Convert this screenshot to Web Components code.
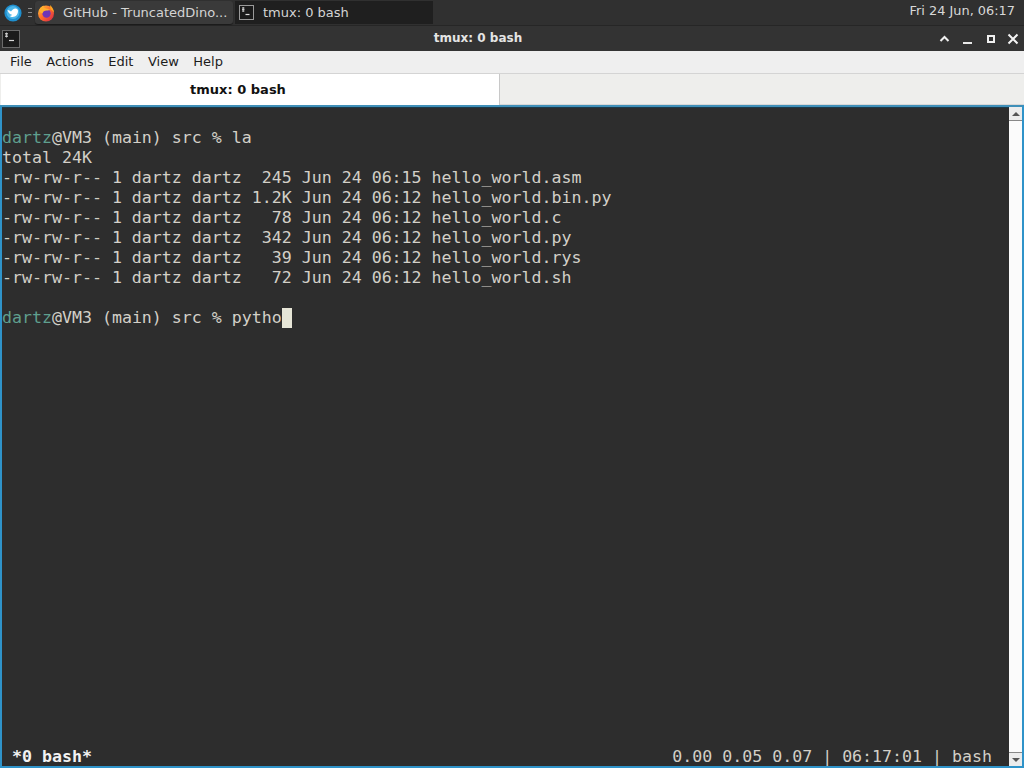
<!DOCTYPE html>
<html>
<head>
<meta charset="utf-8">
<title>tmux: 0 bash</title>
<style>
  html, body { margin: 0; padding: 0; width: 1024px; height: 768px; overflow: hidden; background: #2d2d2d; }
  body { display: flex; flex-direction: column; font-family: "DejaVu Sans", sans-serif; }
</style>
</head>
<body>

<top-panel>
  <task-button slot="tasks" active label="GitHub - TruncatedDino..." icon="firefox"></task-button>
  <task-button slot="tasks" label="tmux: 0 bash" icon="terminal"></task-button>
  <span slot="clock">Fri 24 Jun, 06:17</span>
</top-panel>
<title-bar>tmux: 0 bash</title-bar>
<menu-bar>
  <span>File</span><span>Actions</span><span>Edit</span><span>View</span><span>Help</span>
</menu-bar>
<tab-bar>tmux: 0 bash</tab-bar>
<terminal-view>
  <term-line></term-line>
  <term-line><em>dartz</em>@VM3 (main) src % la</term-line>
  <term-line>total 24K</term-line>
  <term-line>-rw-rw-r-- 1 dartz dartz  245 Jun 24 06:15 hello_world.asm</term-line>
  <term-line>-rw-rw-r-- 1 dartz dartz 1.2K Jun 24 06:12 hello_world.bin.py</term-line>
  <term-line>-rw-rw-r-- 1 dartz dartz   78 Jun 24 06:12 hello_world.c</term-line>
  <term-line>-rw-rw-r-- 1 dartz dartz  342 Jun 24 06:12 hello_world.py</term-line>
  <term-line>-rw-rw-r-- 1 dartz dartz   39 Jun 24 06:12 hello_world.rys</term-line>
  <term-line>-rw-rw-r-- 1 dartz dartz   72 Jun 24 06:12 hello_world.sh</term-line>
  <term-line></term-line>
  <term-line><em>dartz</em>@VM3 (main) src % pytho<term-cursor></term-cursor></term-line>
  <tmux-status slot="status"></tmux-status>
</terminal-view>

<template id="top-panel-template">
  <style>
    :host { display: flex; align-items: stretch; height: 26px; background: #303030; color: #d8d8d8; font-size: 13px; flex: none; border-bottom: 1px solid #262626; box-sizing: border-box; }
    .logo { width: 18px; height: 18px; margin: 4px 0 0 4px; flex: none; }
    .grip { width: 4px; height: 11px; margin: 8px 3px 0 6px; flex: none; background: repeating-linear-gradient(#8a8a8a 0 1px, transparent 1px 4px); }
    .tasks { display: flex; height: 24px; margin-top: 1px; gap: 2px; }
    .clock { margin-left: auto; padding: 3px 9px 0 0; white-space: nowrap; font-size: 12.9px; }
  </style>
  <svg class="logo" viewBox="0 0 18 18">
    <circle cx="9" cy="9" r="8.6" fill="#1f8fce"/>
    <circle cx="9" cy="8.500" r="6.500" fill="#4db6e8"/>
    <path d="M3.500 6c1.500 0 2.500.8 3.500 1.500C8 6 9.500 4.500 11.500 4.500c1.500 0 2.500 1 2.500 2.500 0 3-2 6-5.500 6-1 0-2-.4-2.500-1 1 0 1.800-.5 2-1.200C6 10.500 4 8.500 3.500 6z" fill="#fff"/>
  </svg>
  <div class="grip"></div>
  <div class="tasks"><slot name="tasks"></slot></div>
  <div class="clock"><slot name="clock"></slot></div>
</template>

<template id="task-button-template">
  <style>
    :host { display: flex; align-items: center; width: 198px; height: 23px; box-sizing: border-box; background: #1f1f1f; color: #d4d4d4; font-size: 13px; white-space: nowrap; padding-left: 4px; }
    :host([active]) { background: #3a3a3a; border-radius: 3px; box-shadow: 0 1px 1px #1a1a1a; padding-left: 2px; }
    #icon { display: flex; flex: none; width: 15px; height: 15px; }
    :host([active]) #icon { width: 18px; height: 18px; }
    #icon svg { width: 100%; height: 100%; }
    #label { margin-left: 9px; }
    :host([active]) #label { margin-left: 8px; }
  </style>
  <span id="icon"></span>
  <span id="label"></span>
</template>

<template id="title-bar-template">
  <style>
    :host { display: flex; align-items: center; height: 25px; background: #333333; color: #e4e4e4; font-size: 12px; font-weight: bold; flex: none; }
    .icon { width: 18px; height: 18px; margin-left: 2px; flex: none; }
    .title { flex: 1; text-align: center; padding: 0 0 2px 3px; }
    .btns { display: flex; flex: none; }
    .btns svg { width: 23px; height: 14px; display: block; flex: none; }
  </style>
  <svg class="icon" viewBox="0 0 18 18">
    <rect x=".5" y=".5" width="17" height="17" fill="#1b1b1b" stroke="#6a6a6a"/>
    <path d="M3 3.500h3M3 5h3M3 6.500h3M4.500 2.500v5" stroke="#d8d8d8" stroke-width=".8" fill="none"/>
    <path d="M7 10.500h5" stroke="#d8d8d8" stroke-width="1.200"/>
  </svg>
  <div class="title"><slot></slot></div>
  <div class="btns">
    <svg viewBox="0 0 23 14"><path d="M7.500 9l4-4 4 4" stroke="#f0f0f0" stroke-width="2" fill="none"/></svg>
    <svg viewBox="0 0 23 14"><path d="M7 11h9" stroke="#e8e8e8" stroke-width="2" fill="none"/></svg>
    <svg viewBox="0 0 23 14"><rect x="9" y="4" width="6" height="6" fill="none" stroke="#f0f0f0" stroke-width="2"/></svg>
    <svg viewBox="0 0 22 14" style="width:22px"><path d="M6.500 2.500l9 9M15.500 2.500l-9 9" stroke="#f4f4f4" stroke-width="2" fill="none"/></svg>
  </div>
</template>

<template id="menu-bar-template">
  <style>
    :host { display: flex; align-items: center; gap: 14.5px; height: 21px; padding: 0 0 1px 10px; background: #efefef; color: #1c1c1c; font-size: 13px; flex: none; border-bottom: 1px solid #d4d4d4; }
  </style>
  <slot></slot>
</template>

<template id="tab-bar-template">
  <style>
    :host { display: flex; height: 31px; background: #eeeeec; flex: none; box-sizing: border-box; }
    .tab { width: 499px; height: 31px; margin-left: 1px; box-sizing: border-box; padding-right: 24px; background: #ffffff; border-right: 1px solid #c8c8c8; color: #111; font-size: 13px; font-weight: bold; display: flex; align-items: center; justify-content: center; }
    .rest { flex: 1; border-bottom: 1px solid #d8d8d8; }
  </style>
  <div class="tab"><slot></slot></div>
  <div class="rest"></div>
</template>

<template id="terminal-view-template">
  <style>
    :host { display: flex; flex: 1; min-height: 0; box-sizing: border-box; background: #2d2d2d; border-top: 2px solid #3f8fb8; border-left: 2px solid #2f93c9; border-right: 2px solid #2f93c9; border-bottom: 2px solid #2f93c9; box-shadow: inset 0 1px 0 #1d3a4a; }
    .screen { flex: 1; min-width: 0; display: flex; flex-direction: column; padding-top: 1px; overflow: hidden; }
    .status { margin-top: auto; margin-bottom: -1px; }
  </style>
  <div class="screen">
    <slot></slot>
    <div class="status"><slot name="status"></slot></div>
  </div>
  <term-scrollbar></term-scrollbar>
</template>

<template id="term-line-template">
  <style>
    :host { display: flex; height: 20px; line-height: 20px; font-family: "DejaVu Sans Mono", monospace; font-size: 16.6px; color: #d3d0c8; white-space: pre; }
    ::slotted(em) { font-style: normal; color: #5f9f8e; }
  </style>
  <slot></slot>
</template>

<template id="term-cursor-template">
  <style>
    :host { display: block; width: 10px; height: 20px; background: #e6e5d6; }
  </style>
</template>

<template id="tmux-status-template">
  <style>
    :host { display: flex; justify-content: space-between; height: 20px; line-height: 20px; padding: 0 17px 0 10px; font-family: "DejaVu Sans Mono", monospace; font-size: 16.6px; color: #d3d0c8; white-space: pre; }
    b { color: #f2f2f2; }
  </style>
  <b>*0 bash*</b><span>0.00 0.05 0.07 | 06:17:01 | bash</span>
</template>

<template id="term-scrollbar-template">
  <style>
    :host { display: flex; flex-direction: column; justify-content: space-between; width: 13px; flex: none; background: #fbfbfb; box-sizing: border-box; }
    .b { height: 13px; background: #ececec; display: flex; align-items: center; justify-content: center; }
    .up { border-bottom: 1px solid #888; }
    .down { border-top: 1px solid #888; }
    i { display: block; width: 0; height: 0; border-left: 4px solid transparent; border-right: 4px solid transparent; }
    .up i { border-bottom: 4px solid #555; }
    .down i { border-top: 4px solid #555; }
  </style>
  <div class="b up"><i></i></div>
  <div class="b down"><i></i></div>
</template>

<script>
const ICONS = {
  firefox: `<svg viewBox="0 0 18 18">
    <defs><linearGradient id="ff" x1="0" y1="0" x2="1" y2="1"><stop offset="0" stop-color="#ffc93a"/><stop offset=".5" stop-color="#ff6a2b"/><stop offset="1" stop-color="#d5204f"/></linearGradient></defs>
    <circle cx="9" cy="9.500" r="8" fill="url(#ff)"/>
    <circle cx="9.500" cy="9.500" r="4.200" fill="#6f35b8"/>
    <path d="M2 7c1-3 3-5 4.500-5.500C6 3 7 4 9 4.500c2 .5 3.500 1 4.500 1L11 6.500C8 6 6 7 5.500 9.500 4 9 3 8 2 7z" fill="#ffb02e"/>
    <path d="M13 1c2.500 2 4 5 4 8-1-2-2-3-3.500-3.500z" fill="#ffa51f"/>
  </svg>`,
  terminal: `<svg viewBox="0 0 15 15">
    <rect x=".5" y=".5" width="14" height="14" fill="#1b1b1b" stroke="#9a9a9a"/>
    <path d="M3 3h2.500M3 4.500h2.500M3 6h2.500M4.200 2v5" stroke="#e0e0e0" stroke-width=".8" fill="none"/>
    <path d="M6.500 9.500h4" stroke="#e0e0e0" stroke-width="1.200"/>
  </svg>`
};

class BaseElement extends HTMLElement {
  static get is() { return ''; }
  constructor() {
    super();
    let template = document.getElementById(`${this.constructor.is}-template`);
    this.attachShadow({mode: 'open'});
    this.shadowRoot.appendChild(template.content.cloneNode(true));
  }
}

class TopPanel extends BaseElement { static get is() { return 'top-panel'; } }
class TitleBar extends BaseElement { static get is() { return 'title-bar'; } }
class MenuBar extends BaseElement { static get is() { return 'menu-bar'; } }
class TabBar extends BaseElement { static get is() { return 'tab-bar'; } }
class TerminalView extends BaseElement { static get is() { return 'terminal-view'; } }
class TermLine extends BaseElement { static get is() { return 'term-line'; } }
class TermCursor extends BaseElement { static get is() { return 'term-cursor'; } }
class TmuxStatus extends BaseElement { static get is() { return 'tmux-status'; } }
class TermScrollbar extends BaseElement { static get is() { return 'term-scrollbar'; } }

class TaskButton extends BaseElement {
  static get is() { return 'task-button'; }
  connectedCallback() {
    this.shadowRoot.getElementById('label').textContent = this.getAttribute('label');
    this.shadowRoot.getElementById('icon').innerHTML = ICONS[this.getAttribute('icon')];
  }
}

[TopPanel, TaskButton, TitleBar, MenuBar, TabBar, TerminalView, TermLine, TermCursor, TmuxStatus, TermScrollbar]
  .forEach((c) => customElements.define(c.is, c));
</script>
</body>
</html>
